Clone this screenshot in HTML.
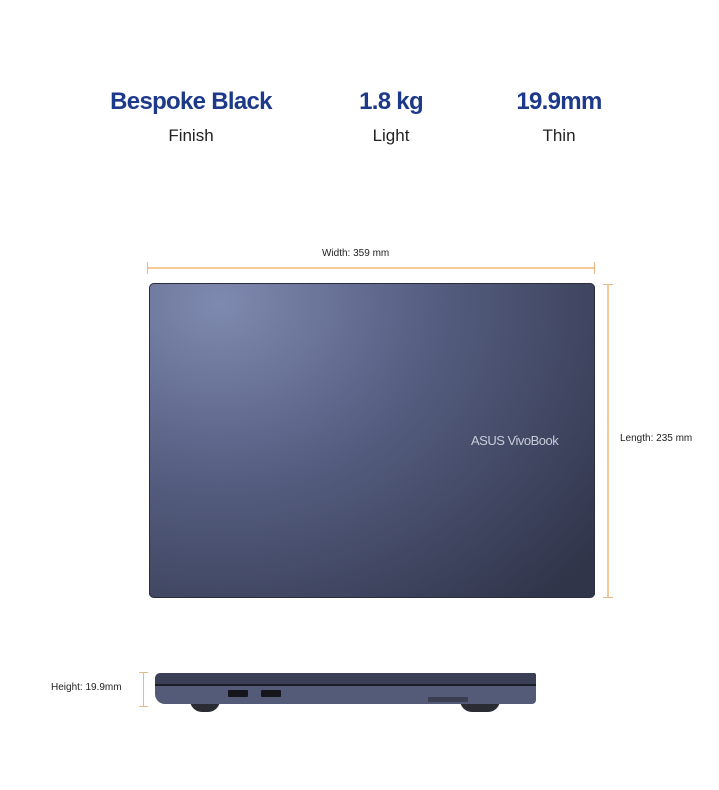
<!DOCTYPE html>
<html><head><style>
body{margin:0;width:719px;height:790px;background:#fff;position:relative;font-family:"Liberation Sans",sans-serif;overflow:hidden}
.a{position:absolute}
.h{color:#1d3a8a;font-weight:bold;font-size:24px;text-align:center;width:240px;letter-spacing:-0.7px}
.s{color:#222;font-size:17px;text-align:center;width:240px}
.sm{font-size:10px;color:#222}
</style></head><body>
<div class="a h" style="left:71px;top:88px">Bespoke Black</div>
<div class="a s" style="left:71px;top:126px">Finish</div>
<div class="a h" style="left:271px;top:88px">1.8 kg</div>
<div class="a s" style="left:271px;top:126px">Light</div>
<div class="a h" style="left:439px;top:88px">19.9mm</div>
<div class="a s" style="left:439px;top:126px">Thin</div>

<div class="a sm" style="left:322px;top:248px">Width: 359 mm</div>
<div class="a" style="left:147px;top:267px;width:447px;height:2px;background:#f5c99a"></div>
<div class="a" style="left:147px;top:262px;width:1px;height:12px;background:#e8b888"></div>
<div class="a" style="left:594px;top:262px;width:1px;height:12px;background:#e8b888"></div>

<div class="a" style="left:149px;top:283px;width:446px;height:315px;border-radius:5px;background:radial-gradient(ellipse 480px 400px at 70px 20px,#7f8ab0 0%,#555d80 45%,#30354a 100%);box-shadow:inset 0 0 0 1px #2a2e3c"></div>
<div class="a" style="left:471px;top:433px;font-size:13px;color:#c8ccd8;letter-spacing:-0.5px">ASUS VivoBook</div>

<div class="a" style="left:607px;top:284px;width:2px;height:313px;background:#f5c99a"></div>
<div class="a" style="left:603px;top:284px;width:10px;height:1px;background:#e8b888"></div>
<div class="a" style="left:603px;top:597px;width:10px;height:1px;background:#e8b888"></div>
<div class="a sm" style="left:620px;top:433px">Length: 235 mm</div>

<div class="a sm" style="left:51px;top:682px">Height: 19.9mm</div>
<div class="a" style="left:143px;top:672px;width:1px;height:34px;background:#e8b888"></div>
<div class="a" style="left:139px;top:672px;width:9px;height:1px;background:#e8b888"></div>
<div class="a" style="left:139px;top:706px;width:9px;height:1px;background:#e8b888"></div>

<div class="a" style="left:190px;top:700px;width:30px;height:12px;border-radius:0 0 15px 15px;background:#2a2c33"></div>
<div class="a" style="left:460px;top:700px;width:40px;height:12px;border-radius:0 0 15px 15px;background:#2a2c33"></div>
<div class="a" style="left:155px;top:673px;width:381px;height:11px;background:#3a3f55;border-radius:5px 2px 0 0"></div>
<div class="a" style="left:155px;top:684px;width:381px;height:2px;background:#1c1e26"></div>
<div class="a" style="left:155px;top:686px;width:381px;height:18px;background:#545b78;border-radius:0 0 4px 10px"></div>
<div class="a" style="left:228px;top:690px;width:20px;height:7px;background:#15161c;border-radius:1px"></div>
<div class="a" style="left:261px;top:690px;width:20px;height:7px;background:#15161c;border-radius:1px"></div>
<div class="a" style="left:428px;top:697px;width:40px;height:5px;background:#3a3e50"></div>
</body></html>
